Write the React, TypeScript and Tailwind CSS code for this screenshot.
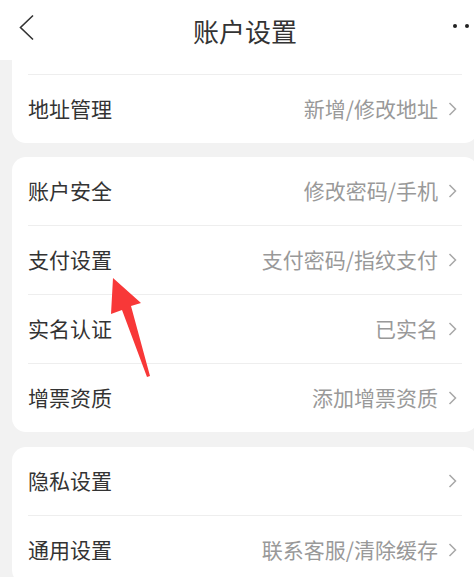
import React from 'react'

interface Row {
  label: string
  value?: string
}

const groups: Row[][] = [
  [
    { label: '账户安全', value: '修改密码/手机' },
    { label: '支付设置', value: '支付密码/指纹支付' },
    { label: '实名认证', value: '已实名' },
    { label: '增票资质', value: '添加增票资质' },
  ],
  [
    { label: '隐私设置' },
    { label: '通用设置', value: '联系客服/清除缓存' },
  ],
]

const Chevron = () => (
  <svg width="9" height="14" viewBox="0 0 9 14" className="ml-[10px] shrink-0">
    <path d="M1.5 1 L7.5 7 L1.5 13" fill="none" stroke="#a8a8a8" strokeWidth="1.5" />
  </svg>
)

const SettingRow = ({ row }: { row: Row }) => (
  <div className="flex h-[68px] items-center justify-between pl-4 pr-[21px]">
    <span className="text-[21px] text-[#333]">{row.label}</span>
    <div className="flex items-center">
      {row.value && <span className="text-[21px] text-[#999]">{row.value}</span>}
      <Chevron />
    </div>
  </div>
)

const Divider = () => <div className="mx-4 h-px bg-[#eeeeee]" />

const App = () => {
  return (
    <div
      className="relative h-[577px] w-[474px] overflow-hidden bg-[#f2f2f2]"
      style={{ fontFamily: '"Noto Sans CJK SC", "Noto Sans", sans-serif' }}
    >
      <div className="w-[490px]">
        {/* 顶部导航 */}
        <div className="relative flex h-[60px] items-center justify-center bg-white">
          <svg width="16" height="28" viewBox="0 0 16 28" className="absolute left-[19px] top-[14px]">
            <path d="M14 1.5 L1.5 13.5 L14 25.5" fill="none" stroke="#333" strokeWidth="1.6" />
          </svg>
          <span className="text-[26px] text-[#333]">账户设置</span>
          <div className="absolute right-[9px] top-[24px] flex gap-[8px]">
            <span className="h-[4px] w-[4px] rounded-full bg-[#222]" />
            <span className="h-[4px] w-[4px] rounded-full bg-[#222]" />
            <span className="h-[4px] w-[4px] rounded-full bg-[#222]" />
          </div>
        </div>

        {/* 滚动后露出的第一组 */}
        <div className="mx-3 rounded-b-[14px] bg-white">
          <div className="h-[14px]" />
          <Divider />
          <SettingRow row={{ label: '地址管理', value: '新增/修改地址' }} />
        </div>

        {groups.map((group, gi) => (
          <div key={gi} className={`mx-3 rounded-[14px] bg-white ${gi === 0 ? 'mt-[14px]' : 'mt-[15px]'}`}>
            {group.map((row, ri) => (
              <React.Fragment key={row.label}>
                {ri > 0 && <Divider />}
                <SettingRow row={row} />
              </React.Fragment>
            ))}
          </div>
        ))}
      </div>

      {/* 红色箭头标注 */}
      <svg width="474" height="577" className="pointer-events-none absolute left-0 top-0">
        <polygon
          points="113,278 141,303 131,306 150,376 147,377 122,310 111,314"
          fill="#f83838"
        />
      </svg>
    </div>
  )
}

export default App
